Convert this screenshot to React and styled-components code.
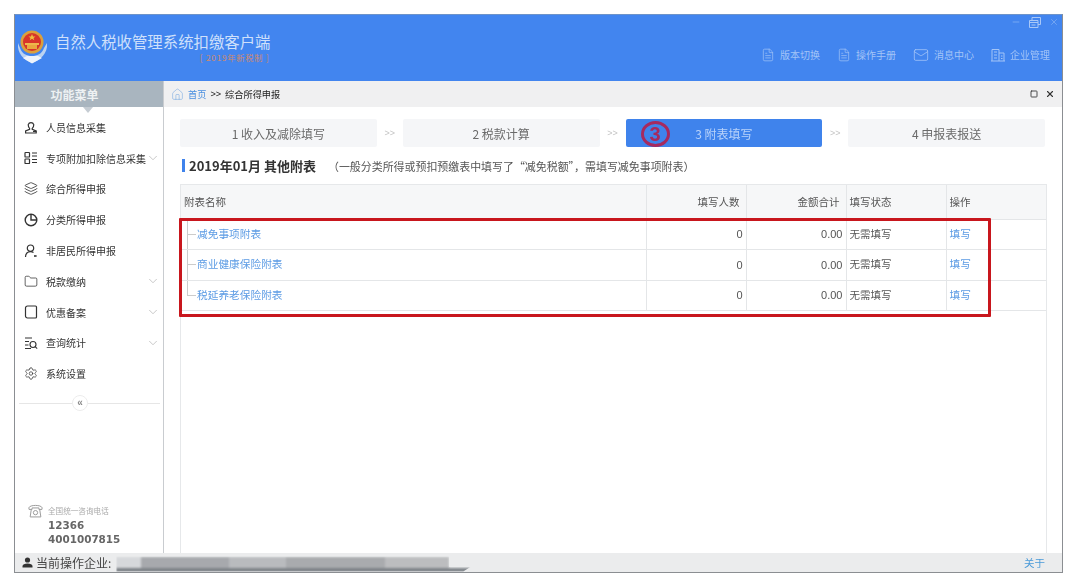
import { ChevronDown, FileText, Layers, Folder, Settings, Mail, House, Minus, X, Square } from 'lucide-react'
import styled, { createGlobalStyle } from 'styled-components'

const GlobalStyle = createGlobalStyle`
  html, body {
    margin: 0;
    background: #fff;
  }
  body {
    font-family: "Noto Sans CJK SC", "Liberation Sans", sans-serif;
    overflow: hidden;
  }
`

const Page = styled.div`
  width: 1080px;
  height: 585px;
  padding: 14px 17px 12px 14px;
  box-sizing: border-box;
  filter: blur(0.45px);
`

const Window = styled.div`
  height: 100%;
  display: flex;
  flex-direction: column;
  border: 1px solid #8b8e92;
  border-top-color: #6d93c9;
  box-sizing: border-box;
`

const Header = styled.header`
  height: 66px;
  flex: none;
  display: flex;
  justify-content: space-between;
  background: #4285ef;
`

const Brand = styled.div`
  display: flex;
  align-items: center;
  gap: 7px;
  padding: 0 0 4px 2px;
`

const BrandText = styled.div`
  display: flex;
  flex-direction: column;
  align-items: flex-end;
`

const AppName = styled.div`
  font-size: 15.4px;
  line-height: 22px;
  color: #cfe0fb;
`

const AppYear = styled.div`
  font-size: 8.2px;
  line-height: 11px;
  color: #d08a6c;
  letter-spacing: 0.8px;
  padding-right: 1px;
`

const HeaderRight = styled.div`
  display: flex;
  flex-direction: column;
  align-items: flex-end;
`

const WinControls = styled.div`
  display: flex;
  align-items: center;
  gap: 8px;
  height: 14px;
  padding-right: 3px;
  color: #a9c8f7;
`

const Toolbar = styled.nav`
  display: flex;
  gap: 17px;
  margin-top: 18px;
  padding-right: 12px;
`

const ToolItem = styled.div`
  display: flex;
  align-items: center;
  gap: 5px;
  font-size: 10px;
  line-height: 16px;
  color: #a3c4f7;
`

const Body = styled.div`
  flex: 1;
  min-height: 0;
  display: flex;
`

const Sidebar = styled.aside`
  width: 148px;
  flex: none;
  display: flex;
  flex-direction: column;
  border-right: 1px solid #c9ccd0;
`

const SideTitle = styled.div`
  position: relative;
  height: 26px;
  flex: none;
  display: flex;
  align-items: center;
  justify-content: center;
  padding-right: 29px;
  box-sizing: border-box;
  background: #a9b5bf;
  color: #eef1f3;
  font-size: 12px;
  font-weight: 700;

  &::after {
    content: "";
    position: absolute;
    left: 68px;
    top: 26px;
    border: 5px solid transparent;
    border-top: 6px solid #c5ccd3;
    border-bottom: 0;
  }
`

const Menu = styled.ul`
  list-style: none;
  margin: 5px 0 0;
  padding: 0;
`

const MenuRow = styled.li`
  display: flex;
  align-items: center;
  height: 30.8px;
  padding: 0 3px 0 9px;
  font-size: 10px;
  color: #333;
`

const MenuIcon = styled.span`
  width: 14px;
  height: 14px;
  flex: none;
  margin-right: 8px;
  display: flex;
  align-items: center;
  justify-content: center;
  color: #333;
`

const MenuChevron = styled.span`
  margin-left: auto;
  display: flex;
  color: #aaa;
`

const Collapse = styled.div`
  display: flex;
  align-items: center;
  margin-top: 6px;
  padding: 0 3px 0 4px;

  &::before, &::after {
    content: "";
    height: 1px;
    background: #e6e6e6;
  }
  &::before {
    width: 53px;
  }
  &::after {
    flex: 1;
  }
`

const CollapseBtn = styled.span`
  width: 14px;
  height: 14px;
  flex: none;
  border: 1px solid #ececec;
  border-radius: 50%;
  display: flex;
  align-items: center;
  justify-content: center;
  color: #888;
  font: bold 10px/1 "Liberation Sans", sans-serif;
`

const Hotline = styled.div`
  margin-top: auto;
  padding: 0 0 7px 13px;
  display: grid;
  grid-template-columns: 20px auto;
  align-items: center;
`

const HotlineLabel = styled.div`
  font-size: 7.6px;
  line-height: 12px;
  color: #aaa;
`

const HotlineNumber = styled.div`
  grid-column: 2;
  font: bold 10.4px/14px "DejaVu Sans", sans-serif;
  color: #666;
`

const Main = styled.main`
  flex: 1;
  min-width: 0;
  display: flex;
  flex-direction: column;
`

const Crumbs = styled.div`
  height: 26px;
  flex: none;
  display: flex;
  align-items: center;
  padding: 0 7px 0 7px;
  background: #f0f0f1;
  font-size: 9.2px;
  color: #222;
`

const CrumbLink = styled.span`
  color: #4a8fe0;
  margin: 0 4px 0 4px;
`

const CrumbSep = styled.span`
  font-family: "Liberation Sans", sans-serif;
  margin-right: 4px;
`

const CrumbTools = styled.span`
  margin-left: auto;
  display: flex;
  align-items: center;
  gap: 7px;
  color: #333;
`

const Content = styled.div`
  flex: 1;
  min-height: 0;
  display: flex;
  flex-direction: column;
  padding: 12px 15px 0 16px;
`

const Steps = styled.div`
  display: flex;
  align-items: center;
  padding-right: 2px;
`

const Step = styled.div`
  position: relative;
  flex: 1;
  height: 28px;
  display: flex;
  align-items: center;
  justify-content: center;
  border-radius: 2px;
  font-size: 12px;
  background: ${p => (p.$active ? '#3f83ec' : '#f5f6f8')};
  color: ${p => (p.$active ? '#b9d3fa' : '#6a6a6a')};
`

const StepArrow = styled.span`
  width: 26px;
  flex: none;
  text-align: center;
  font: 9px "Liberation Sans", sans-serif;
  color: #c4c4c4;
`

const CircledMark = styled.span`
  position: absolute;
  left: 15px;
  top: 2px;
  width: 29px;
  height: 26px;
  box-sizing: border-box;
  border: 3px solid #a62a5f;
  border-radius: 50%;
  display: flex;
  align-items: center;
  justify-content: center;
  color: #a62a5f;
  font: bold 20px/1 "Liberation Sans", sans-serif;
`

const TitleRow = styled.div`
  height: 37px;
  flex: none;
  display: flex;
  align-items: center;
  padding-left: 2px;
`

const TitleBar = styled.span`
  width: 3px;
  height: 13px;
  background: #3f83ec;
  margin-right: 4px;
`

const Title = styled.h2`
  margin: 0 12px 0 0;
  font-size: 13px;
  font-weight: 700;
  color: #333;
`

const Note = styled.span`
  font-size: 10.95px;
  color: #555;
`

const TableWrap = styled.div`
  position: relative;
  flex: 1;
  min-height: 0;
  border: 1px solid #e6e8ea;
  border-bottom: 0;
`

const Table = styled.table`
  width: 100%;
  table-layout: fixed;
  border-collapse: collapse;
  font-size: 10.5px;
  color: #555;
`

const Th = styled.th`
  height: 34px;
  padding: 0 ${p => (p.$right ? '6px' : '3px')};
  box-sizing: border-box;
  background: #f6f7f8;
  border-right: 1px solid #e4e6e8;
  border-bottom: 1px solid #e4e6e8;
  font-weight: 400;
  text-align: ${p => (p.$right ? 'right' : 'left')};
  &:last-child {
    border-right: 0;
  }
`

const Td = styled.td`
  height: 30.6px;
  padding: 0 3px ${p => (p.$right ? '0' : '2px')};
  box-sizing: border-box;
  border-right: 1px solid #e4e6e8;
  border-bottom: 1px solid #e4e6e8;
  text-align: ${p => (p.$right ? 'right' : 'left')};
  font-family: ${p => (p.$right ? '"Liberation Sans", sans-serif' : 'inherit')};
  font-size: ${p => (p.$right ? '11px' : '10.5px')};
  &:last-child {
    border-right: 0;
  }
`

const TreeCell = styled(Td)`
  padding-left: 16px;
  background-image: linear-gradient(#ccc, #ccc), linear-gradient(#ccc, #ccc);
  background-repeat: no-repeat;
  background-position: 6px 50%, 6px 0;
  background-size: 9px 1px, 1px ${p => (p.$last ? '50%' : '100%')};
`

const TableLink = styled.a`
  color: #5b9be4;
  font-size: 10.7px;
`

const RedBox = styled.div`
  position: absolute;
  left: -2px;
  top: 33px;
  width: 812px;
  height: 99px;
  box-sizing: border-box;
  border: 3px solid #c8161d;
  border-radius: 1px;
  pointer-events: none;
`

const StatusBar = styled.footer`
  height: 19px;
  flex: none;
  display: flex;
  align-items: center;
  padding: 0 17px 0 7px;
  background: #ebeced;
  font-size: 12px;
  color: #444;
`

const StatusUser = styled.span`
  display: flex;
  margin-right: 3px;
`

const Redacted = styled.span`
  width: 354px;
  height: 15px;
  margin: 3px 0 0 5px;
  filter: blur(1.2px);
  background:
    linear-gradient(#0000 72%, #7e8388 72%),
    linear-gradient(90deg, #d6d8db 0 7%, #a7a9ad 7% 32%, #b9bbbe 32% 48%, #a9abae 48% 76%, #bcbdbf 76% 94%, #0000 94%);
  clip-path: polygon(0 0, 94% 0, 94% 70%, 100% 70%, 98% 100%, 0 100%);
`

const About = styled.span`
  margin-left: auto;
  font-size: 10.5px;
  color: #4a9ad8;
`

const Emblem = () => (
  <svg width="31" height="36" viewBox="0 0 31 36">
    <path d="M1 15 C0 26 7 32 15 35 C23 32 31 26 30 15 L27 20 C25 26 20 28 15 28 C10 28 5 26 3 20 Z" fill="#bcd3f0" />
    <path d="M6 30 L15 35.5 L25 30 L21 28 L10 28 Z" fill="#eef4fc" />
    <circle cx="15" cy="14" r="11.5" fill="#dba03c" />
    <circle cx="15" cy="14" r="9" fill="#d8352a" />
    <path d="M15 6l1 2.4h2.5l-2 1.5.8 2.4-2.3-1.5-2.3 1.5.8-2.4-2-1.5H14z" fill="#f0c040" />
    <rect x="8" y="15" width="14" height="2" fill="#eeb84c" />
    <rect x="10" y="17" width="10" height="4" fill="#e9a83e" />
  </svg>
)

const PersonLines = () => (
  <svg width="14" height="14" viewBox="0 0 14 14" fill="none" stroke="currentColor" strokeWidth="1.2">
    <path d="M4.2 4.6a3 3 0 0 1 5.6 0c0 2-.8 3.2-1.6 3.8v1l4 1.6v2H1.6v-2l4-1.6v-1C4.9 7.8 4.2 6.6 4.2 4.6z" />
    <path d="M9 11.5h3.4" />
  </svg>
)

const BoxList = () => (
  <svg width="14" height="14" viewBox="0 0 14 14" fill="none" stroke="currentColor" strokeWidth="1.2">
    <rect x="1" y="1.5" width="4.5" height="4.5" rx=".6" />
    <rect x="1" y="8" width="4.5" height="4.5" rx=".6" />
    <path d="M8 2h5M8 5h5M8 8.5h5M8 11.5h5" />
  </svg>
)

const PieIcon = () => (
  <svg width="14" height="14" viewBox="0 0 14 14" fill="none" stroke="currentColor" strokeWidth="1.4">
    <circle cx="7" cy="7" r="5.8" />
    <path d="M7 1.2V7h5.8" />
  </svg>
)

const PersonDot = () => (
  <svg width="14" height="14" viewBox="0 0 14 14" fill="none" stroke="currentColor" strokeWidth="1.2">
    <circle cx="6.5" cy="4.2" r="3.2" />
    <path d="M1.5 13c0-3.4 2-5.4 5-5.4 1.3 0 2.2.3 3 .9" />
    <path d="M10 12h2.6" strokeWidth="1.6" />
  </svg>
)

const SlateIcon = () => (
  <svg width="14" height="14" viewBox="0 0 14 14" fill="none" stroke="currentColor" strokeWidth="1.2">
    <path d="M3.5 1h8a1 1 0 0 1 1 1v10a1 1 0 0 1-1 1h-8a2 2 0 0 1-2-2V3a2 2 0 0 1 2-2z" />
  </svg>
)

const ListSearch = () => (
  <svg width="14" height="14" viewBox="0 0 14 14" fill="none" stroke="currentColor" strokeWidth="1.1">
    <path d="M1 2h7M1 5.5h4M1 9h3.5M1 12.5h6" />
    <circle cx="9" cy="8.5" r="3" />
    <path d="M11.2 10.7 13.2 12.7" />
  </svg>
)

const Building = () => (
  <svg width="14" height="14" viewBox="0 0 14 14" fill="none" stroke="currentColor" strokeWidth="1">
    <path d="M1 13V1.5h7V13M8 5h5v8M0 13h14M3 4h3M3 7h3M3 10h3M10 8h1.5M10 10.5h1.5" />
  </svg>
)

const Restore = () => (
  <svg width="12" height="11" viewBox="0 0 12 11" fill="none" stroke="currentColor" strokeWidth="1">
    <path d="M.5 3.5h8.5v7H.5zM.5 5.5h8.5M3 3.5v-3h8.5v7H9M2.5 8h4" />
  </svg>
)

const Phone = () => (
  <svg width="15" height="15" viewBox="0 0 14 14" fill="none" stroke="#999" strokeWidth=".9">
    <path d="M.8 4.5C1.5 1.5 12.5 1.5 13.2 4.5L13 6h-2.8V4.6H3.8V6H1z" />
    <path d="M3 6.5 2 13h10l-1-6.5" />
    <circle cx="7" cy="9" r="2" />
  </svg>
)

const SolidUser = () => (
  <svg width="11" height="11" viewBox="0 0 11 11" fill="#333">
    <circle cx="5.5" cy="3" r="2.6" />
    <path d="M.5 10.5V9c0-1.6 2.4-2.6 5-2.6s5 1 5 2.6v1.5z" />
  </svg>
)

const menu = [
  { label: '人员信息采集', icon: <PersonLines /> },
  { label: '专项附加扣除信息采集', icon: <BoxList />, more: true },
  { label: '综合所得申报', icon: <Layers size={15} strokeWidth={1.4} /> },
  { label: '分类所得申报', icon: <PieIcon /> },
  { label: '非居民所得申报', icon: <PersonDot /> },
  { label: '税款缴纳', icon: <Folder size={15} strokeWidth={1.3} />, more: true },
  { label: '优惠备案', icon: <SlateIcon />, more: true },
  { label: '查询统计', icon: <ListSearch />, more: true },
  { label: '系统设置', icon: <Settings size={15} strokeWidth={1.25} /> },
]

const tools = [
  { label: '版本切换', icon: <FileText size={14} strokeWidth={1.2} /> },
  { label: '操作手册', icon: <FileText size={14} strokeWidth={1.2} /> },
  { label: '消息中心', icon: <Mail size={16} strokeWidth={1.2} /> },
  { label: '企业管理', icon: <Building /> },
]

const rows = ['减免事项附表', '商业健康保险附表', '税延养老保险附表']

export default function App() {
  return (
    <Page>
      <GlobalStyle />
      <Window>
        <Header>
          <Brand>
            <Emblem />
            <BrandText>
              <AppName>自然人税收管理系统扣缴客户端</AppName>
              <AppYear>[ 2019年新税制 ]</AppYear>
            </BrandText>
          </Brand>
          <HeaderRight>
            <WinControls>
              <Minus size={10} strokeWidth={1.2} />
              <Restore />
              <X size={10} strokeWidth={1.1} />
            </WinControls>
            <Toolbar>
              {tools.map(t => (
                <ToolItem key={t.label}>
                  {t.icon}
                  {t.label}
                </ToolItem>
              ))}
            </Toolbar>
          </HeaderRight>
        </Header>
        <Body>
          <Sidebar>
            <SideTitle>功能菜单</SideTitle>
            <Menu>
              {menu.map(m => (
                <MenuRow key={m.label}>
                  <MenuIcon>{m.icon}</MenuIcon>
                  {m.label}
                  {m.more && (
                    <MenuChevron>
                      <ChevronDown size={14} strokeWidth={1.1} />
                    </MenuChevron>
                  )}
                </MenuRow>
              ))}
            </Menu>
            <Collapse>
              <CollapseBtn>«</CollapseBtn>
            </Collapse>
            <Hotline>
              <Phone />
              <HotlineLabel>全国统一咨询电话</HotlineLabel>
              <HotlineNumber>12366</HotlineNumber>
              <HotlineNumber>4001007815</HotlineNumber>
            </Hotline>
          </Sidebar>
          <Main>
            <Crumbs>
              <House size={13} strokeWidth={1} color="#6fa3e0" />
              <CrumbLink>首页</CrumbLink>
              <CrumbSep>&gt;&gt;</CrumbSep>
              综合所得申报
              <CrumbTools>
                <Square size={8} strokeWidth={2.6} />
                <X size={10} strokeWidth={2.6} />
              </CrumbTools>
            </Crumbs>
            <Content>
              <Steps>
                <Step>1 收入及减除填写</Step>
                <StepArrow>&gt;&gt;</StepArrow>
                <Step>2 税款计算</Step>
                <StepArrow>&gt;&gt;</StepArrow>
                <Step $active>
                  <CircledMark>3</CircledMark>
                  3 附表填写
                </Step>
                <StepArrow>&gt;&gt;</StepArrow>
                <Step>4 申报表报送</Step>
              </Steps>
              <TitleRow>
                <TitleBar />
                <Title>2019年01月 其他附表</Title>
                <Note>（一般分类所得或预扣预缴表中填写了“减免税额”，需填写减免事项附表）</Note>
              </TitleRow>
              <TableWrap>
                <Table>
                  <colgroup>
                    <col style={{ width: 465 }} />
                    <col style={{ width: 100 }} />
                    <col style={{ width: 100 }} />
                    <col style={{ width: 100 }} />
                    <col />
                  </colgroup>
                  <thead>
                    <tr>
                      <Th>附表名称</Th>
                      <Th $right>填写人数</Th>
                      <Th $right>金额合计</Th>
                      <Th>填写状态</Th>
                      <Th>操作</Th>
                    </tr>
                  </thead>
                  <tbody>
                    {rows.map((name, i) => (
                      <tr key={name}>
                        <TreeCell $last={i === rows.length - 1}>
                          <TableLink>{name}</TableLink>
                        </TreeCell>
                        <Td $right>0</Td>
                        <Td $right>0.00</Td>
                        <Td>无需填写</Td>
                        <Td>
                          <TableLink>填写</TableLink>
                        </Td>
                      </tr>
                    ))}
                  </tbody>
                </Table>
                <RedBox />
              </TableWrap>
            </Content>
          </Main>
        </Body>
        <StatusBar>
          <StatusUser>
            <SolidUser />
          </StatusUser>
          当前操作企业:
          <Redacted />
          <About>关于</About>
        </StatusBar>
      </Window>
    </Page>
  )
}
